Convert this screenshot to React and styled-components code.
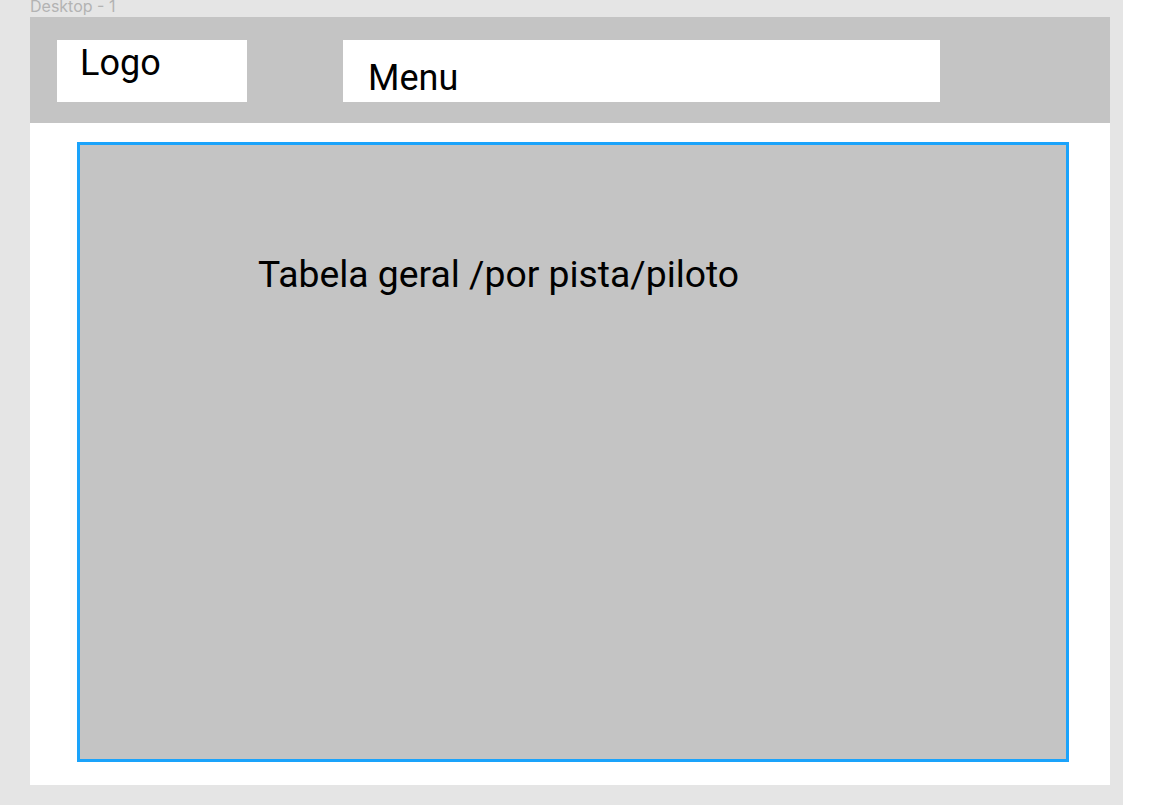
import React from 'react'
import styled, { createGlobalStyle } from 'styled-components'

const GlobalStyle = createGlobalStyle`
  html, body {
    margin: 0;
    padding: 0;
    background: #ffffff;
  }
  body {
    font-family: Roboto, 'Liberation Sans', sans-serif;
    overflow: hidden;
  }
`

const App = () => {
  return (
    <>
      <GlobalStyle />
      <Canvas>
        <FrameLabel>Desktop - 1</FrameLabel>
        <Frame>
          <Header>
            <LogoBox>Logo</LogoBox>
            <MenuBox>Menu</MenuBox>
          </Header>
          <Content>
            <Panel>
              <PanelTitle>Tabela geral /por pista/piloto</PanelTitle>
            </Panel>
          </Content>
        </Frame>
      </Canvas>
    </>
  )
}

const Canvas = styled.div`
  width: 1123px;
  height: 805px;
  background-color: #e5e5e5;
  padding-left: 30px;
  box-sizing: border-box;
  overflow: hidden;
`
const FrameLabel = styled.div`
  height: 17px;
  font-family: Inter, 'Noto Sans', sans-serif;
  font-size: 16px;
  line-height: 16px;
  color: #b3b3b3;
  margin-top: -2px;
  padding-bottom: 2px;
  white-space: nowrap;
`
const Frame = styled.div`
  width: 1080px;
  height: 768px;
  background-color: #ffffff;
  display: flex;
  flex-direction: column;
`
const Header = styled.div`
  height: 106px;
  background-color: #c4c4c4;
  display: flex;
  align-items: flex-start;
  gap: 96px;
  padding: 23px 0 0 27px;
  box-sizing: border-box;
`
const Box = styled.div`
  height: 62px;
  background-color: #ffffff;
  box-sizing: border-box;
  font-size: 36px;
  color: #000000;
  line-height: normal;
`
const LogoBox = styled(Box)`
  width: 190px;
  padding: 2px 0 0 23px;
`
const MenuBox = styled(Box)`
  width: 597px;
  padding: 17px 0 0 25px;
`
const Content = styled.div`
  flex: 1;
  padding: 19px 41px 23px 47px;
  display: flex;
`
const Panel = styled.div`
  flex: 1;
  background-color: #c4c4c4;
  border: 3px solid #1aa3fb;
  padding: 107px 0 0 178px;
`
const PanelTitle = styled.div`
  font-size: 37.3px;
  line-height: normal;
  color: #000000;
`

export default App
